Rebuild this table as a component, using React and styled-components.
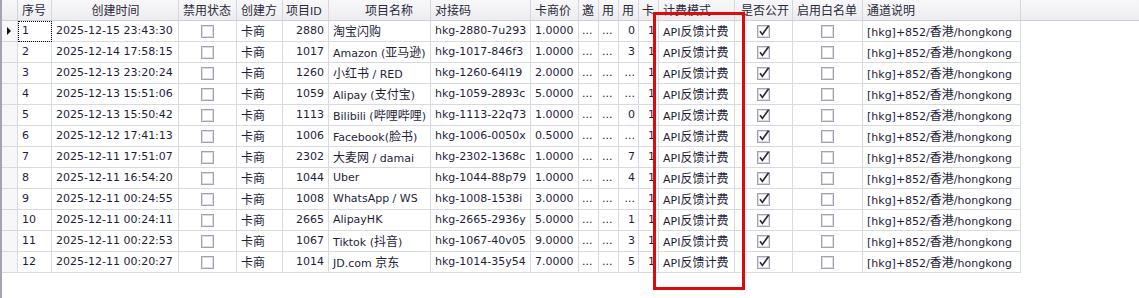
import React from 'react';
import styled, { createGlobalStyle } from 'styled-components';

const GlobalStyle = createGlobalStyle`
  html, body {
    margin: 0;
    padding: 0;
    background: #fff;
  }
  body {
    font-family: "DejaVu Sans", "Noto Sans CJK SC", sans-serif;
    font-size: 11px;
    color: #1e1e3a;
  }
`;

const GridPage = styled.div`
  position: relative;
  height: 298px;
  overflow: hidden;
  border-left: 2px solid #a3a3b1;
  background: #fff;
`;

const HeaderRow = styled.div`
  display: flex;
  height: 21px;
  background: linear-gradient(#f8f8fa, #ededf1);
  border-bottom: 1px solid #d0d0d9;
  box-sizing: border-box;
`;

const HeadCell = styled.div`
  flex: 0 0 ${p => p.$w}px;
  box-sizing: border-box;
  height: 20px;
  line-height: 20px;
  border-right: 1px solid #d6d6de;
  padding: 0 ${p => p.$pr ?? 3}px 0 ${p => p.$pl ?? 4}px;
  text-align: ${p => p.$align || 'left'};
  white-space: nowrap;
  overflow: hidden;
  color: #2a2a3a;
`;

const HeadFiller = styled.div`
  flex: 1;
`;

const Row = styled.div`
  display: flex;
  height: 21px;
`;

const Cell = styled.div`
  flex: 0 0 ${p => p.$w}px;
  box-sizing: border-box;
  height: 21px;
  line-height: 20px;
  border-right: 1px solid #d9d9e1;
  border-bottom: 1px solid #d9d9e1;
  padding: 0 4px;
  text-align: ${p => p.$align || 'left'};
  white-space: nowrap;
  overflow: hidden;
  ${p => p.$focus && `
    outline: 1px dotted #000;
    outline-offset: -1px;
  `}
  ${p => p.$center && `
    display: flex;
    align-items: center;
    justify-content: center;
    padding: 0;
  `}
`;

const RowHead = styled.div`
  flex: 0 0 16px;
  box-sizing: border-box;
  height: 21px;
  border-right: 1px solid #d9d9e1;
  border-bottom: 1px solid #d9d9e1;
  background: #f7f7f9;
  display: flex;
  align-items: center;
  justify-content: center;
`;

const HeadCorner = styled.div`
  flex: 0 0 16px;
  box-sizing: border-box;
  height: 20px;
  border-right: 1px solid #d6d6de;
`;

const Arrow = styled.span`
  width: 0;
  height: 0;
  border-top: 4px solid transparent;
  border-bottom: 4px solid transparent;
  border-left: 4px solid #111;
  margin-left: -1px;
`;

const Cjk = styled.span`
  font-family: "Noto Sans CJK SC", sans-serif;
  font-size: 12px;
`;

const Highlight = styled.div`
  position: absolute;
  left: 651px;
  top: 12px;
  width: 92px;
  height: 278px;
  box-sizing: border-box;
  border: 3px solid #dc0a0a;
  pointer-events: none;
`;

// split a label into latin / cjk runs so the han glyphs get their own size
function Txt({ children }) {
  const parts = String(children).split(/([\u3000-\u9fff\uff00-\uffef]+)/);
  return parts.map((s, i) =>
    /[\u3000-\u9fff\uff00-\uffef]/.test(s) ? <Cjk key={i}>{s}</Cjk> : s
  );
}

function CheckBox({ checked }) {
  return (
    <svg width="13" height="13" viewBox="0 0 13 13">
      <rect x="0.5" y="0.5" width="12" height="12" fill="#fff" stroke="#a2a2b4" />
      <rect x="1.5" y="1.5" width="10" height="10" fill="none" stroke="#dcdce4" />
      {checked && (
        <path d="M3 6.2 L5.4 9.4 L11.6 0.8" fill="none" stroke="#2b2b3c" strokeWidth="1.7" />
      )}
    </svg>
  );
}

const columns = [
  { key: 'no', title: '序号', w: 34 },
  { key: 'time', title: '创建时间', w: 127, hAlign: 'center' },
  { key: 'disabled', title: '禁用状态', w: 58, check: true, hpl: 4 },
  { key: 'creator', title: '创建方', w: 46 },
  { key: 'pid', title: '项目ID', w: 46, align: 'right', hpl: 3 },
  { key: 'name', title: '项目名称', w: 102, hpl: 36 },
  { key: 'code', title: '对接码', w: 100 },
  { key: 'price', title: '卡商价', w: 48 },
  { key: 'inv', title: '邀', w: 20, pad: 3 },
  { key: 'use1', title: '用', w: 20, pad: 3 },
  { key: 'use2', title: '用', w: 20, align: 'right', pad: 3 },
  { key: 'card', title: '卡', w: 20, align: 'right', pad: 3 },
  { key: 'mode', title: '计费模式', w: 76 },
  { key: 'pub', title: '是否公开', w: 58, check: true, hpl: 6 },
  { key: 'white', title: '启用白名单', w: 70, check: true },
  { key: 'desc', title: '通道说明', w: 158 },
];

const raw = [
  ['1', '2025-12-15 23:43:30', '2880', '淘宝闪购', 'hkg-2880-7u293', '1.0000', '0'],
  ['2', '2025-12-14 17:58:15', '1017', 'Amazon (亚马逊)', 'hkg-1017-846f3', '1.0000', '3'],
  ['3', '2025-12-13 23:20:24', '1260', '小红书 / RED', 'hkg-1260-64l19', '2.0000', '...'],
  ['4', '2025-12-13 15:51:06', '1059', 'Alipay (支付宝)', 'hkg-1059-2893c', '5.0000', '...'],
  ['5', '2025-12-13 15:50:42', '1113', 'Bilibili (哔哩哔哩)', 'hkg-1113-22q73', '1.0000', '0'],
  ['6', '2025-12-12 17:41:13', '1006', 'Facebook(脸书)', 'hkg-1006-0050x', '0.5000', '...'],
  ['7', '2025-12-11 17:51:07', '2302', '大麦网 / damai', 'hkg-2302-1368c', '1.0000', '7'],
  ['8', '2025-12-11 16:54:20', '1044', 'Uber', 'hkg-1044-88p79', '1.0000', '4'],
  ['9', '2025-12-11 00:24:55', '1008', 'WhatsApp / WS', 'hkg-1008-1538i', '3.0000', '...'],
  ['10', '2025-12-11 00:24:11', '2665', 'AlipayHK', 'hkg-2665-2936y', '5.0000', '1'],
  ['11', '2025-12-11 00:22:53', '1067', ' Tiktok (抖音)', 'hkg-1067-40v05', '9.0000', '3'],
  ['12', '2025-12-11 00:20:27', '1014', 'JD.com 京东', 'hkg-1014-35y54', '7.0000', '5'],
];

const rows = raw.map(([no, time, pid, name, code, price, use2]) => ({
  no, time, pid, name, code, price, use2,
  disabled: false,
  creator: '卡商',
  inv: '...',
  use1: '...',
  card: '1',
  mode: 'API反馈计费',
  pub: true,
  white: false,
  desc: '[hkg]+852/香港/hongkong',
}));

export default function App() {
  return (
    <>
      <GlobalStyle />
      <GridPage>
        <HeaderRow>
          <HeadCorner />
          {columns.map(c => (
            <HeadCell key={c.key} $w={c.w} $align={c.hAlign} $pl={c.hpl ?? c.pad}>
              <Txt>{c.title}</Txt>
            </HeadCell>
          ))}
          <HeadFiller />
        </HeaderRow>
        {rows.map((r, i) => (
          <Row key={r.no}>
            <RowHead>{i === 0 && <Arrow />}</RowHead>
            {columns.map(c => (
              c.check ? (
                <Cell key={c.key} $w={c.w} $center>
                  <CheckBox checked={r[c.key]} />
                </Cell>
              ) : (
                <Cell
                  key={c.key}
                  $w={c.w}
                  $align={c.align}
                  $focus={i === 0 && c.key === 'no'}
                  style={c.pad ? { paddingLeft: c.pad, paddingRight: c.pad } : undefined}
                >
                  <Txt>{r[c.key]}</Txt>
                </Cell>
              )
            ))}
          </Row>
        ))}
        <Highlight />
      </GridPage>
    </>
  );
}
